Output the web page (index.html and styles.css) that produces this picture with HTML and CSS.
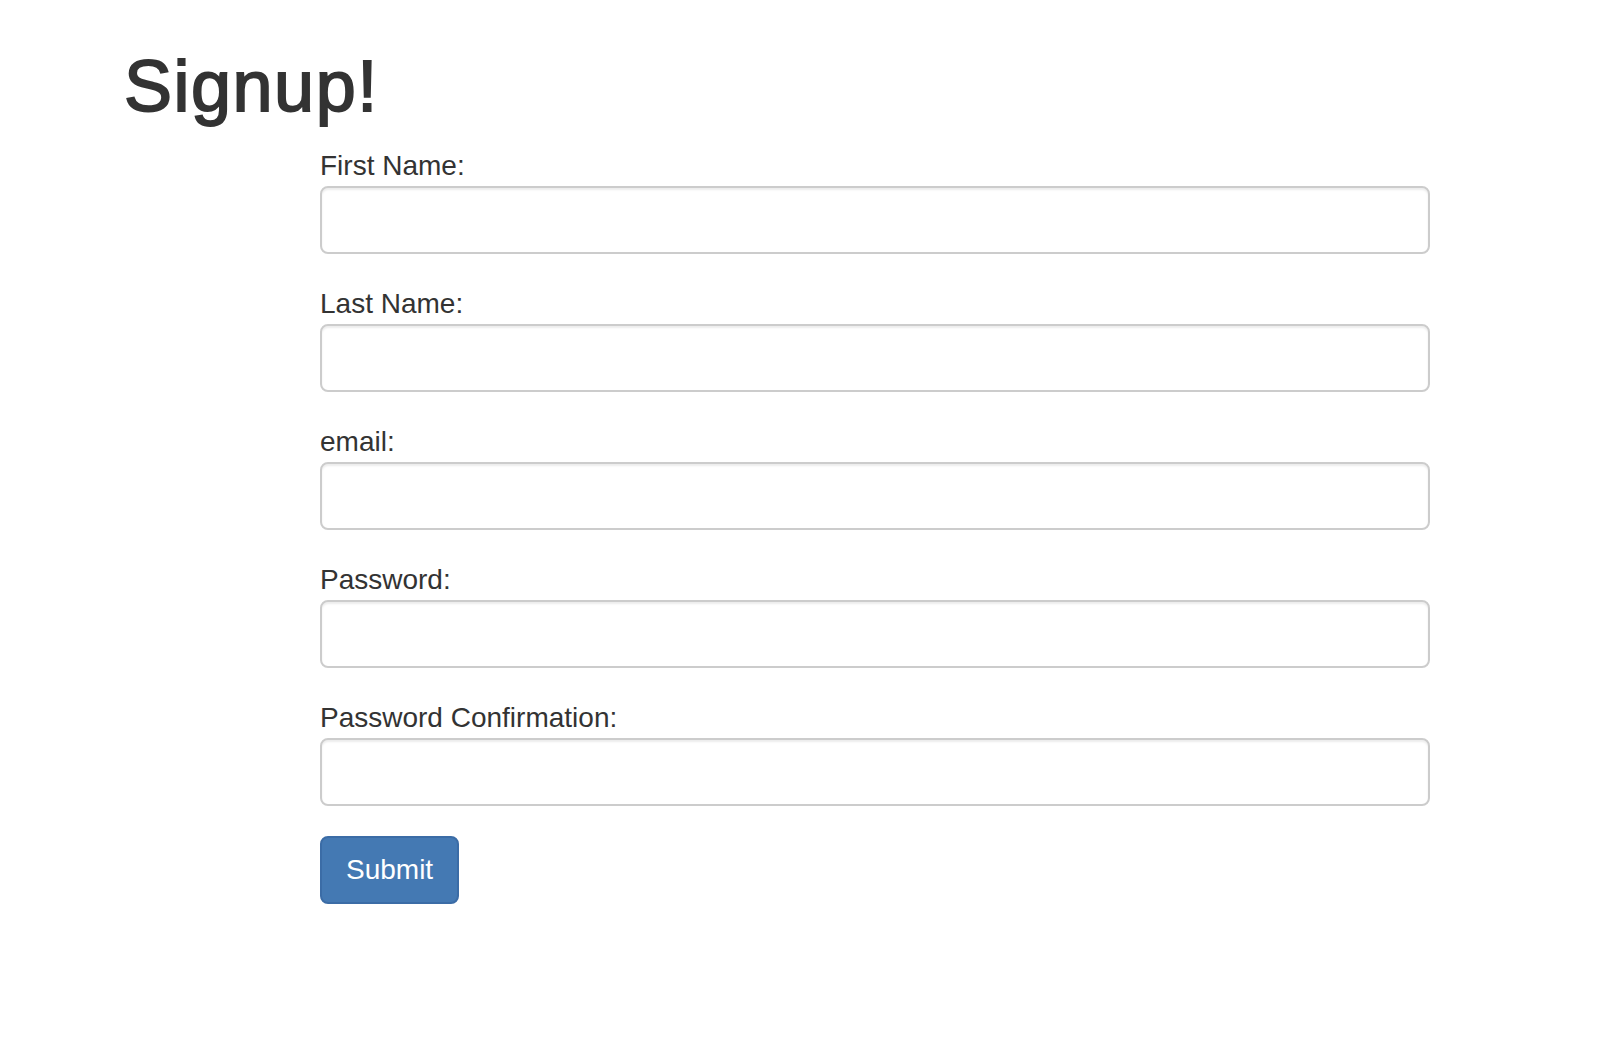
FILE: index.html
```html
<!DOCTYPE html>
<html lang="en">
<head>
<meta charset="utf-8">
<title>Signup!</title>
<link rel="stylesheet" href="styles.css">
</head>
<body>
<div class="page">
  <h1 class="title">Signup!</h1>
  <form class="signup">
    <div class="form-group">
      <label class="field-label" for="first">First Name:</label>
      <input class="field" id="first" type="text">
    </div>
    <div class="form-group">
      <label class="field-label" for="last">Last Name:</label>
      <input class="field" id="last" type="text">
    </div>
    <div class="form-group">
      <label class="field-label" for="email">email:</label>
      <input class="field" id="email" type="text">
    </div>
    <div class="form-group">
      <label class="field-label" for="pw">Password:</label>
      <input class="field" id="pw" type="password">
    </div>
    <div class="form-group">
      <label class="field-label" for="pwc">Password Confirmation:</label>
      <input class="field" id="pwc" type="password">
    </div>
    <button class="btn-submit" type="button">Submit</button>
  </form>
</div>
</body>
</html>
```

FILE: styles.css
```css
html, body {
  margin: 0;
  padding: 0;
  background: #ffffff;
}

body {
  font-family: "Liberation Sans", Arial, Helvetica, sans-serif;
  color: #333333;
}

.page {
  padding: 7px 0 0 124px;
}

.title {
  margin: 40px 0 20px 0;
  font-size: 72px;
  line-height: 79px;
  font-weight: 500;
  letter-spacing: 1.5px;
  color: #333333;
  -webkit-text-stroke: 1.8px #333333;
}

.signup {
  margin-left: 196px;
  width: 1110px;
}

.form-group {
  margin-bottom: 30px;
}

.field-label {
  display: block;
  margin: 0;
  font-size: 28px;
  line-height: 40px;
  font-weight: normal;
  color: #333333;
}

.field {
  display: block;
  box-sizing: border-box;
  width: 100%;
  height: 68px;
  margin: 0;
  padding: 12px 24px;
  font-family: inherit;
  font-size: 28px;
  border: 2px solid #cccccc;
  border-radius: 8px;
  background: #ffffff;
  box-shadow: inset 0 2px 2px rgba(0, 0, 0, 0.075);
  outline: none;
}

.btn-submit {
  display: inline-block;
  box-sizing: border-box;
  height: 68px;
  margin: 0;
  padding: 12px 24px;
  font-family: inherit;
  font-size: 28px;
  line-height: 40px;
  color: #ffffff;
  background: #4479b3;
  border: 2px solid #3b6ca6;
  border-radius: 8px;
  cursor: pointer;
}
```
